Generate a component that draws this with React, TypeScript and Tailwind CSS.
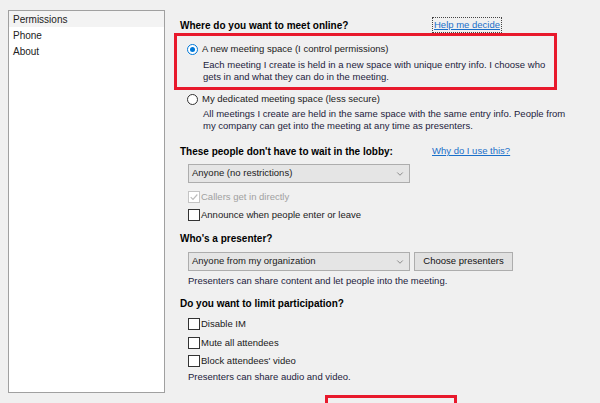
import { ChevronDown } from "lucide-react"

const font = { fontFamily: '"Liberation Sans", Arial, sans-serif' }

function Radio({ checked, label }: { checked?: boolean; label: string }) {
  return (
    <div className="flex h-[14px] items-center">
      <span
        className={`flex h-[11px] w-[11px] items-center justify-center rounded-full border bg-white ${
          checked ? "border-[#0078d7]" : "border-[#333]"
        }`}
      >
        {checked && <span className="h-[5px] w-[5px] rounded-full bg-[#0078d7]" />}
      </span>
      <span className="ml-[4px]">{label}</span>
    </div>
  )
}

function Check({ label, checked, disabled }: { label: string; checked?: boolean; disabled?: boolean }) {
  return (
    <div className={`flex h-[14px] items-center ${disabled ? "text-[#a0a0a0]" : ""}`}>
      <span
        className={`flex h-[12px] w-[12px] items-center justify-center border bg-white ${
          disabled ? "border-[#c4c4c4] bg-[#f0f0f0]" : "border-[#333]"
        }`}
      >
        {checked && (
          <svg viewBox="0 0 12 12" className="h-[10px] w-[10px]">
            <path d="M2 6.2 L4.8 9 L10 3" fill="none" stroke="#bcbcbc" strokeWidth="1.4" />
          </svg>
        )}
      </span>
      <span className="ml-[1px]">{label}</span>
    </div>
  )
}

function Select({ value }: { value: string }) {
  return (
    <div className="flex h-[19px] w-[222px] items-center justify-between border border-[#adadad] bg-[#e5e5e5] pl-[3px] pr-[4px]">
      <span>{value}</span>
      <ChevronDown size={10} strokeWidth={1.5} className="text-[#555]" />
    </div>
  )
}

export default function App() {
  return (
    <div className="flex h-[403px] w-[600px] overflow-hidden bg-[#f0f0f0] text-[9.5px] text-[#1a1a1a]" style={font}>
      <div className="ml-[8px] mt-[10px] h-[383px] w-[157px] shrink-0 border border-[#a0a0a0] bg-white text-[10px] text-[#222]">
        <div className="flex h-[16px] items-center bg-[#f3f3f3] pl-[4px]">Permissions</div>
        <div className="flex h-[16px] items-center pl-[4px]">Phone</div>
        <div className="flex h-[16px] items-center pl-[4px]">About</div>
      </div>

      <div className="ml-[15px] flex flex-col">
        <div className="mt-[18px] flex h-[14px] items-center">
          <span className="w-[252px] shrink-0 text-[10px] font-bold text-black">Where do you want to meet online?</span>
          <span className="border border-dotted border-[#444] px-[1px] text-[#1a6fc9] underline">Help me decide</span>
        </div>

        <div className="-ml-[6px] mt-[1px] w-[383px] border-[3px] border-[#e8192c] pb-[4px] pl-[10px] pt-[6px]">
          <Radio checked label="A new meeting space (I control permissions)" />
          <div className="ml-[16px] mt-[3px] leading-[12px] text-[#1c1c3c]">
            Each meeting I create is held in a new space with unique entry info. I choose who
            <br />
            gets in and what they can do in the meeting.
          </div>
        </div>

        <div className="ml-[7px] mt-[2px]">
          <Radio label="My dedicated meeting space (less secure)" />
          <div className="ml-[16px] mt-[2px] leading-[12px] text-[#1c1c3c]">
            All meetings I create are held in the same space with the same entry info. People from
            <br />
            my company can get into the meeting at any time as presenters.
          </div>
        </div>

        <div className="mt-[12px] flex h-[14px] items-center">
          <span className="w-[252px] shrink-0 text-[10px] font-bold text-black">These people don't have to wait in the lobby:</span>
          <span className="text-[#1a6fc9] underline">Why do I use this?</span>
        </div>

        <div className="ml-[8px] mt-[6px]">
          <Select value="Anyone (no restrictions)" />
        </div>
        <div className="ml-[8px] mt-[7px]">
          <Check disabled checked label="Callers get in directly" />
        </div>
        <div className="ml-[8px] mt-[4px]">
          <Check label="Announce when people enter or leave" />
        </div>

        <div className="mt-[9px] flex h-[14px] items-center text-[10px] font-bold text-black">Who's a presenter?</div>

        <div className="ml-[8px] mt-[7px] flex gap-[4px]">
          <Select value="Anyone from my organization" />
          <button className="h-[19px] w-[99px] border border-[#adadad] bg-[#e1e1e1] text-[#111]">Choose presenters</button>
        </div>
        <div className="ml-[8px] mt-[4px] leading-[12px] text-[#1c1c3c]">
          Presenters can share content and let people into the meeting.
        </div>

        <div className="mt-[9px] flex h-[14px] items-center text-[10px] font-bold text-black">
          Do you want to limit participation?
        </div>
        <div className="ml-[8px] mt-[7px]">
          <Check label="Disable IM" />
        </div>
        <div className="ml-[8px] mt-[5px]">
          <Check label="Mute all attendees" />
        </div>
        <div className="ml-[8px] mt-[4px]">
          <Check label="Block attendees' video" />
        </div>
        <div className="ml-[8px] mt-[3px] leading-[12px] text-[#1c1c3c]">Presenters can share audio and video.</div>

        <div className="ml-[145px] mt-[12px] h-[24px] w-[132px] shrink-0 border-[3px] border-[#e8192c]" />
      </div>
    </div>
  )
}
